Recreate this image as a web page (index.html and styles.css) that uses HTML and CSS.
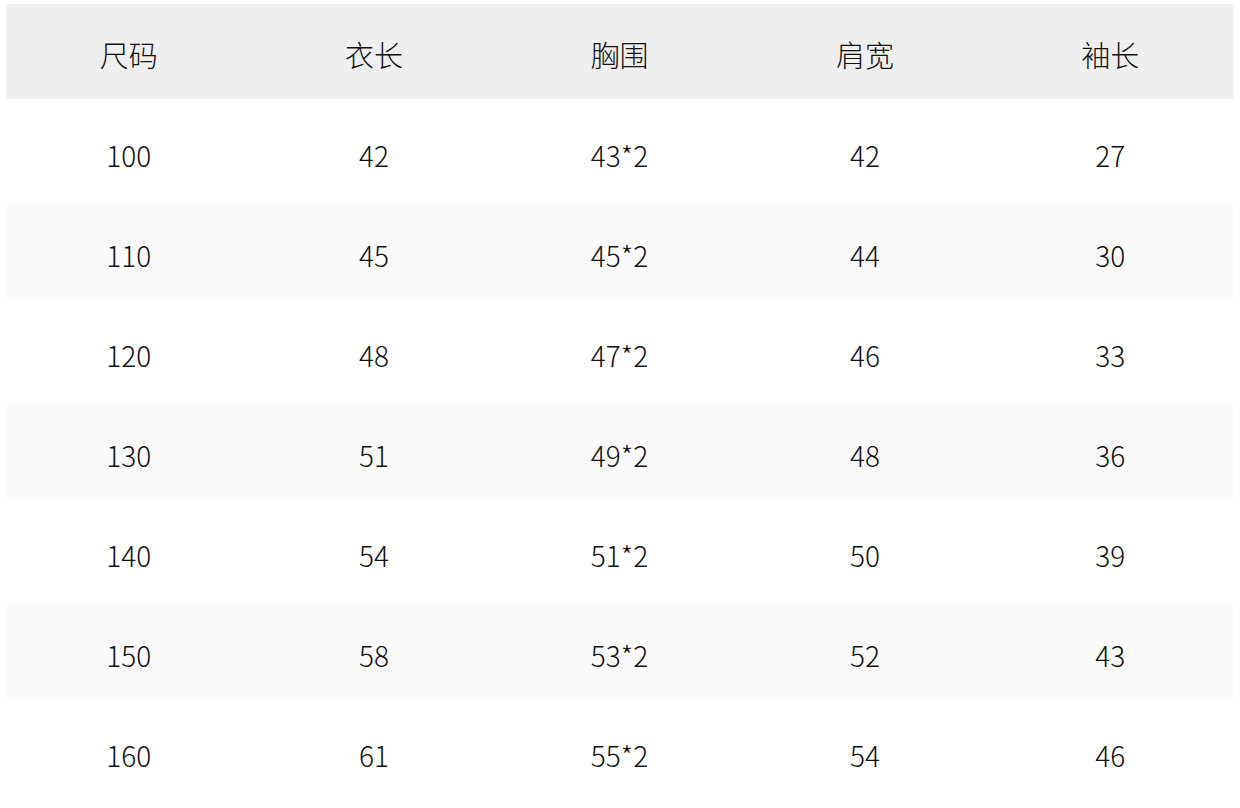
FILE: index.html
```html
<!DOCTYPE html>
<html lang="zh">
<head>
<meta charset="utf-8">
<link rel="stylesheet" href="styles.css">
</head>
<body>
<div class="table">
  <div class="row head"><div>尺码</div><div>衣长</div><div>胸围</div><div>肩宽</div><div>袖长</div></div>
  <div class="row"><div>100</div><div>42</div><div>43*2</div><div>42</div><div>27</div></div>
  <div class="row alt"><div>110</div><div>45</div><div>45*2</div><div>44</div><div>30</div></div>
  <div class="row"><div>120</div><div>48</div><div>47*2</div><div>46</div><div>33</div></div>
  <div class="row alt"><div>130</div><div>51</div><div>49*2</div><div>48</div><div>36</div></div>
  <div class="row"><div>140</div><div>54</div><div>51*2</div><div>50</div><div>39</div></div>
  <div class="row alt"><div>150</div><div>58</div><div>53*2</div><div>52</div><div>43</div></div>
  <div class="row"><div>160</div><div>61</div><div>55*2</div><div>54</div><div>46</div></div>
</div>
</body>
</html>
```
FILE: styles.css
```css
html, body {
  margin: 0;
  padding: 0;
  background: #ffffff;
}
body {
  font-family: "Noto Sans CJK SC", "Noto Sans", sans-serif;
  color: #111111;
}
.table {
  padding: 4px 7px 0 6px;
}
.row {
  display: grid;
  grid-template-columns: repeat(5, 1fr);
  height: 95px;
  margin-bottom: 5px;
  align-items: center;
}
.row > div {
  text-align: center;
  font-size: 28px;
  font-weight: 300;
  line-height: 1;
  padding-top: 6px;
}
.head > div {
  font-size: 29px;
}
.head {
  background: #efefef;
}
.alt {
  background: #fafafa;
}
```
